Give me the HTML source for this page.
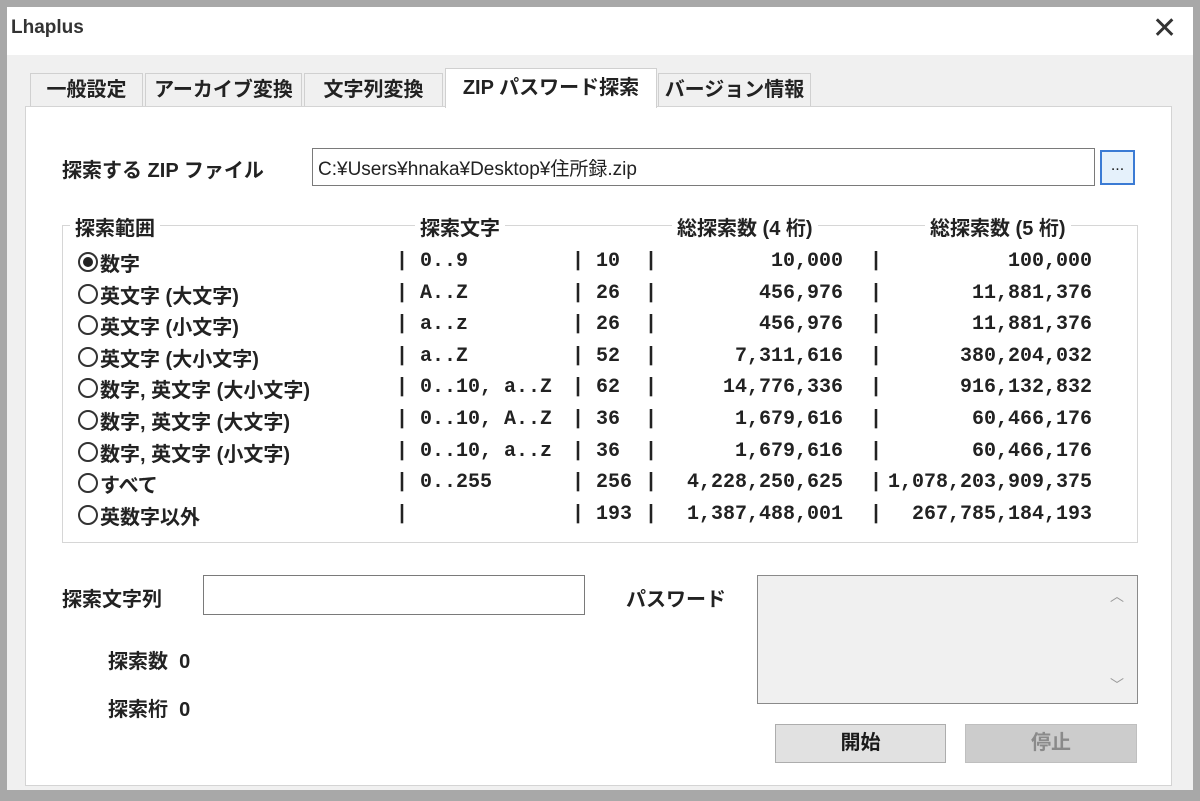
<!DOCTYPE html>
<html><head><meta charset="utf-8"><style>
*{box-sizing:border-box;margin:0;padding:0}
body{width:1200px;height:801px;background:#a8a8a8;position:relative;overflow:hidden;font-family:"Liberation Sans","Noto Sans CJK JP",sans-serif;color:#1a1a1a}
.abs{position:absolute;white-space:nowrap}
#win{position:absolute;left:7px;top:7px;width:1186px;height:783px;background:#f0f0f0}
#title{position:absolute;left:0;top:0;width:1186px;height:48px;background:#fff}
.tab{position:absolute;top:66px;height:35px;border:1px solid #d0d0d0;border-bottom:none;background:#f0f0f0;font-size:20px;font-weight:bold;line-height:33px;text-align:center;color:#222}
#panel{position:absolute;left:18px;top:99px;width:1147px;height:680px;background:#fff;border:1px solid #d4d4d4}
.t{font-size:20px;font-weight:bold;color:#222}
.m{font-family:"Liberation Mono","Noto Sans CJK JP",monospace;font-size:20px;font-weight:bold;color:#222}
.r{text-align:right}
.radio{position:absolute;width:20px;height:20px;border:2px solid #333;border-radius:50%;background:#fff}
.radio.on::after{content:"";position:absolute;left:3px;top:3px;width:10px;height:10px;border-radius:50%;background:#222}
.btn{position:absolute;background:#e1e1e1;border:1px solid #adadad;font-size:20px;font-weight:bold;text-align:center;line-height:36px}
</style></head><body>
<div id="win">
<div id="title"><div class="abs" style="left:4px;top:10px;font-size:19px;font-weight:bold;color:#333">Lhaplus</div>
<div class="abs" style="left:1145px;top:4px;font-size:30px;font-weight:normal;color:#333">✕</div></div>
<div class="tab" style="left:23px;width:113px">一般設定</div>
<div class="tab" style="left:138px;width:157px">アーカイブ変換</div>
<div class="tab" style="left:297px;width:139px">文字列変換</div>
<div class="tab" style="left:651px;width:153px">バージョン情報</div>
<div id="panel"></div>
<div class="tab" style="left:438px;top:61px;height:40px;width:212px;background:#fff;z-index:2;line-height:38px">ZIP パスワード探索</div>
</div>
<div class="abs t" style="left:62px;top:154px">探索する ZIP ファイル</div>
<div class="abs" style="left:312px;top:148px;width:783px;height:38px;border:1px solid #7a7a7a;background:#fff"></div>
<div class="abs" style="left:318px;top:154px;font-size:19px;color:#222">C:¥Users¥hnaka¥Desktop¥住所録.zip</div>
<div class="abs" style="left:1100px;top:150px;width:35px;height:35px;border:2px solid #3b7bd4;background:#e5f1fb;text-align:center;font-size:16px;line-height:28px">...</div>
<div class="abs" style="left:62px;top:225px;width:1076px;height:318px;border:1px solid #d6d6d6"></div>
<div class="abs t" style="left:70px;top:212px;background:#fff;padding:0 5px">探索範囲</div>
<div class="abs t" style="left:415px;top:212px;background:#fff;padding:0 5px">探索文字</div>
<div class="abs t" style="left:672px;top:212px;background:#fff;padding:0 5px">総探索数 (4 桁)</div>
<div class="abs t" style="left:925px;top:212px;background:#fff;padding:0 5px">総探索数 (5 桁)</div>
<div id="rows"></div>
<div class="abs t" style="left:62px;top:583px">探索文字列</div>
<div class="abs" style="left:203px;top:575px;width:382px;height:40px;border:1px solid #7a7a7a;background:#fff"></div>
<div class="abs t" style="left:626px;top:583px">パスワード</div>
<div class="abs" style="left:757px;top:575px;width:381px;height:129px;border:1px solid #8a8a8a;background:#f0f0f0"></div>
<div class="abs" style="left:1110px;top:586px;font-size:14px;color:#999">︿</div>
<div class="abs" style="left:1110px;top:675px;font-size:14px;color:#999">﹀</div>
<div class="abs t" style="left:108px;top:645px">探索数&nbsp;&nbsp;0</div>
<div class="abs t" style="left:108px;top:693px">探索桁&nbsp;&nbsp;0</div>
<div class="btn" style="left:775px;top:724px;width:171px;height:39px">開始</div>
<div class="btn" style="left:965px;top:724px;width:172px;height:39px;background:#cccccc;border-color:#bfbfbf;color:#8a8a8a">停止</div>
<script>
var d=[["数字","0..9","10","10,000","100,000",1],["英文字 (大文字)","A..Z","26","456,976","11,881,376"],["英文字 (小文字)","a..z","26","456,976","11,881,376"],["英文字 (大小文字)","a..Z","52","7,311,616","380,204,032"],["数字, 英文字 (大小文字)","0..10, a..Z","62","14,776,336","916,132,832"],["数字, 英文字 (大文字)","0..10, A..Z","36","1,679,616","60,466,176"],["数字, 英文字 (小文字)","0..10, a..z","36","1,679,616","60,466,176"],["すべて","0..255","256","4,228,250,625","1,078,203,909,375"],["英数字以外","","193","1,387,488,001","267,785,184,193"]];
var h="";d.forEach(function(r,i){var y=250+i*31.6;
h+='<div class="radio'+(r[5]?' on':'')+'" style="left:78px;top:'+(y+2)+'px"></div>';
h+='<div class="abs t" style="left:100px;top:'+(y-2)+'px">'+r[0]+'</div>';
h+='<div class="abs m" style="left:396px;top:'+y+'px">| '+r[1]+'</div>';
h+='<div class="abs m" style="left:572px;top:'+y+'px">| '+r[2]+'</div>';
h+='<div class="abs m" style="left:645px;top:'+y+'px">|</div>';
h+='<div class="abs m r" style="left:600px;width:243px;top:'+y+'px">'+r[3]+'</div>';
h+='<div class="abs m" style="left:870px;top:'+y+'px">|</div>';
h+='<div class="abs m r" style="left:850px;width:242px;top:'+y+'px">'+r[4]+'</div>';});
document.getElementById("rows").innerHTML=h;
</script>
</body></html>
